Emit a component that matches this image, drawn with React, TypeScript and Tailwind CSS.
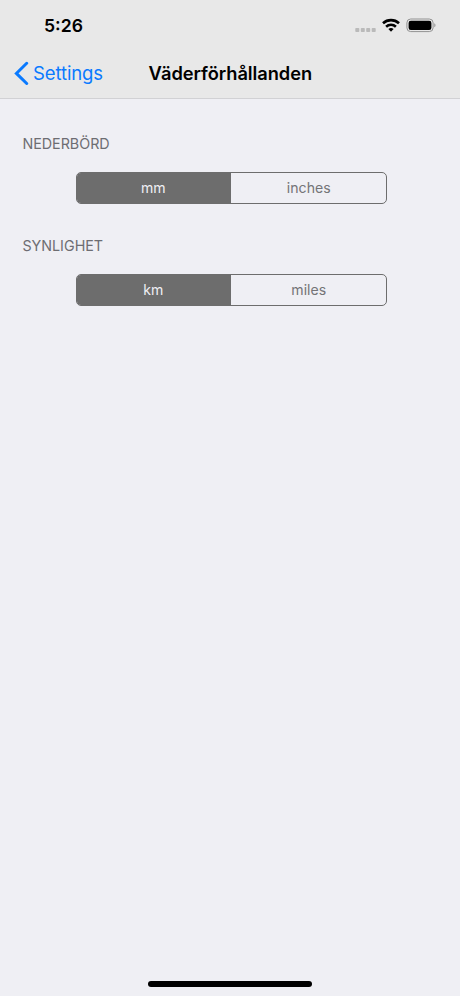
type Setting = { label: string; options: [string, string] };

const settings: Setting[] = [
  { label: "NEDERBÖRD", options: ["mm", "inches"] },
  { label: "SYNLIGHET", options: ["km", "miles"] },
];

export default function App() {
  return (
    <div className="flex h-[996px] w-[460px] flex-col overflow-hidden bg-[#efeff4] font-['Inter',sans-serif]">
      <header className="h-[99px] border-b border-[#d1d1d4] bg-[#e8e8e8]">
        <StatusBar />
        <NavBar />
      </header>

      <main className="flex-1 pt-[35px]">
        {settings.map((setting) => (
          <UnitSetting key={setting.label} setting={setting} />
        ))}
      </main>

      {/* Home indicator */}
      <div className="mx-auto mb-[9px] h-[6px] w-[164px] rounded-full bg-black" />
    </div>
  );
}

function StatusBar() {
  return (
    <div className="flex h-[50px] items-center justify-between pl-[44px] pr-[24px]">
      <span className="pt-[2px] text-[17.6px] font-semibold leading-5 text-black">5:26</span>
      <svg width="82" height="18" viewBox="0 0 82 18">
        {/* Signal */}
        <g fill="#bababa">
          <rect x="1.3" y="12" width="4" height="4" rx="0.8" />
          <rect x="6.8" y="12" width="4" height="4" rx="0.8" />
          <rect x="12.2" y="12" width="4" height="4" rx="0.8" />
          <rect x="17.7" y="12" width="4" height="4" rx="0.8" />
        </g>
        {/* Wi-Fi */}
        <g fill="none" stroke="#000" strokeWidth="2.6">
          <path d="M29 7.3a11.8 11.8 0 0 1 16 0" />
          <path d="M32.1 10.7a7.2 7.2 0 0 1 9.8 0" />
        </g>
        <path d="M34.4 13.1a4 4 0 0 1 5.2 0L37 15.8Z" fill="#000" />
        {/* Battery */}
        <rect x="52.9" y="3" width="26.2" height="12.6" rx="3.8" fill="none" stroke="#929292" />
        <rect x="54.6" y="4.7" width="22.8" height="9.2" rx="2.2" fill="#000" />
        <path d="M80.3 7.3c1.6.7 1.6 3.3 0 4Z" fill="#929292" />
      </svg>
    </div>
  );
}

function NavBar() {
  return (
    <div className="grid h-[46px] grid-cols-[148.5px_1fr] items-center">
      <div className="flex items-center gap-1 pl-[14px] text-[#0a7aff]">
        <svg
          width="15"
          height="24"
          viewBox="0 0 15 24"
          fill="none"
          stroke="currentColor"
          strokeWidth="3"
          strokeLinecap="round"
        >
          <path d="M12.7 2.3 2.4 12.4l10.3 10.1" />
        </svg>
        <span className="text-[18.5px] leading-6 tracking-[-0.1px]">Settings</span>
      </div>
      <h1 className="text-[18.3px] font-semibold leading-6 tracking-[-0.06px] text-black">Väderförhållanden</h1>
    </div>
  );
}

function UnitSetting({ setting }: { setting: Setting }) {
  return (
    <section className="mb-[32px]">
      <h2 className="h-5 pl-[22.4px] text-[14.3px] leading-5 text-[#6d6d72]">{setting.label}</h2>
      <div className="ml-[76px] mt-[18px] grid h-[32px] w-[310.5px] grid-cols-[154px_1fr] overflow-hidden rounded-[5px] border border-[#6d6d6d] text-center text-[14.1px] leading-[30px]">
        <span className="bg-[#6d6d6d] pr-[1.5px] text-[#efeff4]">{setting.options[0]}</span>
        <span className="pl-px text-[#747477]">{setting.options[1]}</span>
      </div>
    </section>
  );
}
